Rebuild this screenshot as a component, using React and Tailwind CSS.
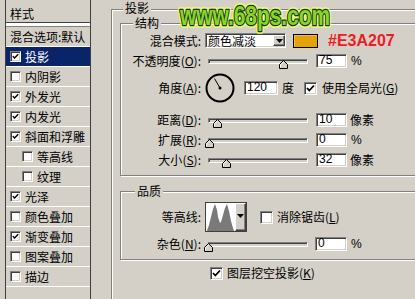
import React from "react";

const sunken =
  "border border-t-[#808080] border-l-[#808080] border-r-white border-b-white shadow-[inset_1px_1px_0_#404040,inset_-1px_-1px_0_#d4d0c8]";
const raised =
  "border border-t-white border-l-white border-r-[#404040] border-b-[#404040] shadow-[inset_-1px_-1px_0_#808080] bg-[#d4d0c8]";

function Check({ checked, small }) {
  return (
    <span
      className={`inline-flex shrink-0 items-center justify-center bg-white ${sunken} ${
        small ? "w-[11px] h-[11px]" : "w-[13px] h-[13px]"
      }`}
    >
      {checked && (
        <svg width="9" height="9" viewBox="0 0 9 9" className={small ? "w-[7px] h-[7px]" : "w-[9px] h-[9px]"}>
          <polyline points="1,4 3.3,6.5 8,1.5" fill="none" stroke="#000" strokeWidth="1.8" />
        </svg>
      )}
    </span>
  );
}

function Arrow() {
  return (
    <svg width="7" height="4" viewBox="0 0 7 4">
      <path d="M0 0 H7 L3.5 4 Z" fill="#000" />
    </svg>
  );
}

function Group({ title, className, legend, children }) {
  return (
    <div className={`relative shrink-0 border border-[#808080] shadow-[inset_1px_1px_0_#fff,1px_1px_0_#fff] ${className}`}>
      <span className={`absolute px-[2px] bg-[#d4d0c8] leading-[14px] ${legend}`}>{title}</span>
      {children}
    </div>
  );
}

function Label({ children }) {
  return <div className="w-[80px] shrink-0 text-right mr-[4px] leading-[14px] whitespace-nowrap">{children}</div>;
}

function U({ c }) {
  return (
    <>
      (<span className="underline">{c}</span>):
    </>
  );
}

function Slider({ thumb }) {
  return (
    <div className="relative w-[103px] h-[14px] shrink-0">
      <div className={`absolute left-[3px] right-0 top-[5px] h-[5px] bg-[#d4d0c8] ${sunken}`} />
      <svg className={`absolute top-[6px] ${thumb}`} width="9" height="9" viewBox="0 0 9 9">
        <path d="M4.5 0.5 L8.5 4.5 L8.5 8.5 L0.5 8.5 L0.5 4.5 Z" fill="#d4d0c8" stroke="#000" strokeWidth="1" />
        <path d="M1.5 7.5 V4.9 L4.5 1.9" fill="none" stroke="#fff" strokeWidth="1" />
      </svg>
    </div>
  );
}

function Input({ value, w }) {
  return (
    <div className={`h-[14px] shrink-0 bg-white ${sunken} ${w} pl-[2px] leading-[11px] text-[12px] font-['Liberation_Sans',sans-serif]`}>
      {value}
    </div>
  );
}

const listItems = [
  { t: "投影", c: true, sel: true },
  { t: "内阴影", c: false },
  { t: "外发光", c: true },
  { t: "内发光", c: true },
  { t: "斜面和浮雕", c: true },
  { t: "等高线", c: false, indent: true },
  { t: "纹理", c: false, indent: true },
  { t: "光泽", c: true },
  { t: "颜色叠加", c: false },
  { t: "渐变叠加", c: true },
  { t: "图案叠加", c: false },
  { t: "描边", c: false },
];

export default function App() {
  return (
    <div className="relative w-[415px] h-[299px] bg-[#d4d0c8] flex overflow-hidden text-[12px] leading-[14px] text-black font-['Noto_Sans_CJK_SC','Noto_Sans',sans-serif]">
      {/* left style list */}
      <div className="ml-[5px] w-[86px] h-full shrink-0 border-x border-[#404040] flex flex-col">
        <div className="h-[23px] shrink-0 border-b border-[#404040] pl-[4px] pt-[7px]">样式</div>
        <div className="h-[4px] shrink-0 bg-white border-b border-[#808080]" />
        <div className="h-[20px] shrink-0 border-b border-white flex items-center pl-[4px] whitespace-nowrap">
          混合选项:默认
        </div>
        {listItems.map((it) => (
          <div
            key={it.t}
            className={`h-[20px] shrink-0 border-b border-white flex items-center whitespace-nowrap ${
              it.indent ? "pl-[16px]" : "pl-[4px]"
            } ${it.sel ? "bg-[#0a246a] text-white" : ""}`}
          >
            <Check checked={it.c} small />
            <span className="ml-[4px]">{it.t}</span>
          </div>
        ))}
      </div>

      {/* right panel */}
      <div className="ml-[20px] flex flex-col">
        <Group title="投影" legend="top-[-9px] left-[11px]" className="mt-[9px] w-[320px] h-[300px] pl-[8px] pt-[13px] flex flex-col">
          <Group title="结构" legend="top-[-8px] left-[12px]" className="w-[300px] h-[153px] flex flex-col">
            {/* blend mode */}
            <div className="mt-[9px] h-[15px] flex items-center">
              <Label>混合模式:</Label>
              <div className={`w-[81px] h-[15px] bg-white ${sunken} flex items-center`}>
                <span className="pl-[2px] flex-1 leading-[12px]">颜色减淡</span>
                <div className={`w-[12px] h-[11px] ${raised} flex items-center justify-center`}>
                  <Arrow />
                </div>
              </div>
              <div className="ml-[7px] w-[25px] h-[14px] bg-[#e3a207] border border-[#000] shadow-[inset_1px_1px_0_#f0c040]" />
              <span className="ml-[10px] text-[16px] leading-[16px] font-bold text-[#ec1c24] font-['Liberation_Sans',sans-serif]">
                #E3A207
              </span>
            </div>
            {/* opacity */}
            <div className="mt-[6px] h-[14px] flex items-center">
              <Label>
                不透明度<U c="O" />
              </Label>
              <Slider thumb="left-[74px]" />
              <div className="ml-[8px]">
                <Input value="75" w="w-[31px]" />
              </div>
              <span className="ml-[4px] font-['Liberation_Sans',sans-serif]">%</span>
            </div>
            {/* angle */}
            <div className="mt-[5px] h-[30px] flex items-center">
              <Label>
                角度<U c="A" />
              </Label>
              <svg width="30" height="30" viewBox="0 0 30 30" className="shrink-0">
                <circle cx="15" cy="15" r="13.5" fill="none" stroke="#000" strokeWidth="2" />
                <line x1="15" y1="15" x2="9.5" y2="5.5" stroke="#000" strokeWidth="1" />
                <circle cx="15" cy="15" r="1.5" fill="#000" />
              </svg>
              <div className="ml-[9px]">
                <Input value="120" w="w-[34px]" />
              </div>
              <span className="ml-[4px]">度</span>
              <div className="ml-[10px] flex items-center">
                <Check checked />
                <span className="ml-[5px] whitespace-nowrap">
                  使用全局光(<span className="underline">G</span>)
                </span>
              </div>
            </div>
            {/* distance */}
            <div className="mt-[10px] h-[14px] flex items-center">
              <Label>
                距离<U c="D" />
              </Label>
              <Slider thumb="left-[8px]" />
              <div className="ml-[8px]">
                <Input value="10" w="w-[31px]" />
              </div>
              <span className="ml-[3px]">像素</span>
            </div>
            {/* spread */}
            <div className="mt-[6px] h-[14px] flex items-center">
              <Label>
                扩展<U c="R" />
              </Label>
              <Slider thumb="left-[0px]" />
              <div className="ml-[8px]">
                <Input value="0" w="w-[31px]" />
              </div>
              <span className="ml-[4px] font-['Liberation_Sans',sans-serif]">%</span>
            </div>
            {/* size */}
            <div className="mt-[6px] h-[14px] flex items-center">
              <Label>
                大小<U c="S" />
              </Label>
              <Slider thumb="left-[17px]" />
              <div className="ml-[8px]">
                <Input value="32" w="w-[31px]" />
              </div>
              <span className="ml-[3px]">像素</span>
            </div>
          </Group>

          <Group title="品质" legend="top-[-8px] left-[14px]" className="mt-[15px] w-[300px] h-[69px] flex flex-col">
            <div className="mt-[10px] h-[30px] flex items-center">
              <Label>等高线:</Label>
              <div className="w-[42px] h-[30px] flex border border-[#404040] bg-white">
                <svg width="29" height="28" viewBox="0 0 29 28" className="shrink-0">
                  <polygon
                    points="1,28 3,22 5,14 7,6 9,1 11,7 12,14 14,20 15,19 17,12 19,5 21,1 23,8 25,18 27,25 28,28"
                    fill="#7a7a7a"
                  />
                </svg>
                <div className={`flex-1 ${raised} flex items-start justify-center pt-[10px]`}>
                  <Arrow />
                </div>
              </div>
              <div className="ml-[13px] flex items-center">
                <Check checked={false} />
                <span className="ml-[4px] whitespace-nowrap">
                  消除锯齿(<span className="underline">L</span>)
                </span>
              </div>
            </div>
            <div className="mt-[5px] h-[14px] flex items-center">
              <Label>
                杂色<U c="N" />
              </Label>
              <Slider thumb="left-[-1px]" />
              <div className="ml-[7px]">
                <Input value="0" w="w-[32px]" />
              </div>
              <span className="ml-[4px] font-['Liberation_Sans',sans-serif]">%</span>
            </div>
          </Group>

          <div className="mt-[6px] ml-[90px] flex items-center">
            <Check checked />
            <span className="ml-[4px] whitespace-nowrap">
              图层挖空投影(<span className="underline">K</span>)
            </span>
          </div>
        </Group>
      </div>

      {/* watermark overlay (logo) */}
      <svg className="absolute left-[176px] top-0 overflow-visible" width="164" height="40" viewBox="0 0 164 40">
        <text
          x="4"
          y="25"
          fontSize="28"
          fontWeight="bold"
          fontFamily="Liberation Sans, Arial, sans-serif"
          textLength="150"
          lengthAdjust="spacingAndGlyphs"
          fill="none"
          stroke="#f4ff60"
          strokeWidth="6"
          strokeLinejoin="round"
          opacity="0.8"
        >
          www.68ps.com
        </text>
        <text
          x="4"
          y="25"
          fontSize="28"
          fontWeight="bold"
          fontFamily="Liberation Sans, Arial, sans-serif"
          textLength="150"
          lengthAdjust="spacingAndGlyphs"
          fill="#8fd41e"
          stroke="#0b3a2c"
          strokeWidth="2.5"
          strokeLinejoin="round"
          paintOrder="stroke"
        >
          www.68ps.com
        </text>
      </svg>
    </div>
  );
}
